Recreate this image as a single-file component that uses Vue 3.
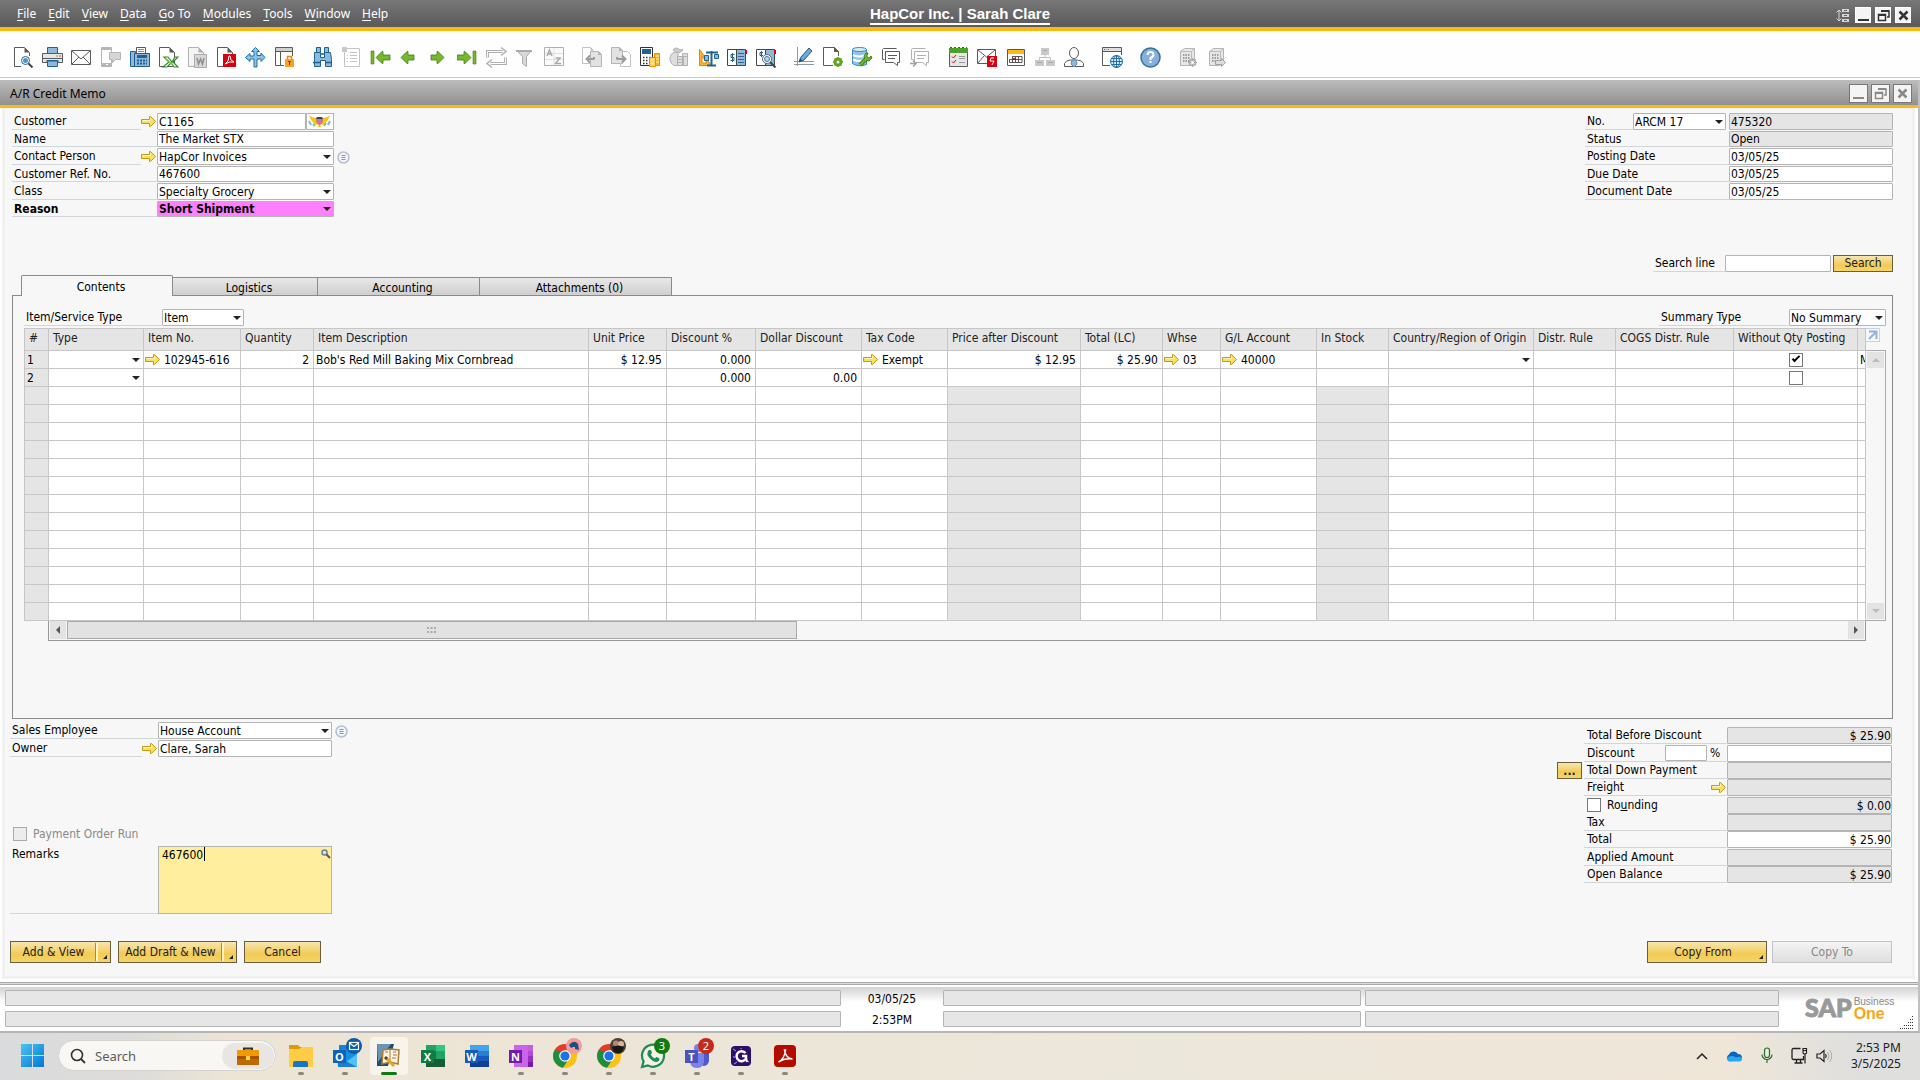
<template>
  <div class="desktop">
    <header class="menubar">
      <nav class="menus">
        <a v-for="m in menus" :key="m" href="#"><u>{{ m.charAt(0) }}</u>{{ m.slice(1) }}</a>
      </nav>
      <a class="company" href="#">HapCor Inc. | Sarah Clare</a>
      <div class="app-controls">
        <svg class="sort-icon" width="13" height="13" viewBox="0 0 13 13">
          <path d="M3 1v11M.5 3.500 3 1l2.500 2.500M.5 9.500 3 12l2.500-2.500" fill="none" stroke="#d8d8d8" />
          <path d="M6 0h7v3H6zM6 5h7v3H6zM6 10h7v3H6z" fill="#d8d8d8" />
          <path d="M8 1.500h3M8 6.500h3M8 11.500h3" stroke="#666" />
        </svg>
        <button v-for="c in controls" :key="c" type="button" class="win-btn" :aria-label="c">
          <svg width="13" height="13" viewBox="0 0 13 13" v-html="controlIcons[c]"></svg>
        </button>
      </div>
    </header>

    <div class="toolbar">
      <div v-for="(group, i) in toolbar" :key="i" class="tool-group">
        <button v-for="name in group" :key="name" type="button" class="tool" :aria-label="name">
          <svg width="21" height="21" viewBox="0 0 21 21" v-html="icons[name]"></svg>
        </button>
      </div>
    </div>

    <main class="window">
      <div class="titlebar">
        <span>A/R Credit Memo</span>
        <div class="doc-controls">
          <button v-for="c in controls" :key="c" type="button" class="win-btn large" :aria-label="c">
            <svg width="13" height="13" viewBox="0 0 13 13" v-html="controlIcons[c]"></svg>
          </button>
        </div>
      </div>

      <div class="body">
        <section class="doc-head">
          <div class="fields">
            <div class="row">
              <label for="customer">Customer</label>
              <svg class="link-arrow" width="15" height="11" viewBox="0 0 15 11" v-html="arrow"></svg>
              <div class="control split">
                <input id="customer" type="text" v-model="doc.customer">
                <button type="button" class="flag" aria-label="Country">
                  <svg width="25" height="15" viewBox="0 0 25 15">
                    <path d="M2 1q3 3 8 3l1 6-2 1Q4 8 2 1zM23 1q-3 3-8 3l-1 6 2 1q5-3 7-10z" fill="#f0c814" />
                    <path d="M10 3h5l1 2H9z" fill="#39405c" />
                    <path d="M9 5h7v3l-3.500 4L9 8z" fill="#d2787e" />
                    <path d="M2 7l2 4M23 7l-2 4" stroke="#86b8d8" stroke-width="2" />
                    <path d="M6 10l2 2M19 9l-2 3" stroke="#8cc07c" stroke-width="2" />
                    <path d="M10 12l2.500 1.500L15 12z" fill="#f0c814" />
                  </svg>
                </button>
              </div>
            </div>
            <div class="row">
              <label for="name">Name</label>
              <input id="name" class="control" type="text" v-model="doc.name">
            </div>
            <div class="row">
              <label for="contact">Contact Person</label>
              <svg class="link-arrow" width="15" height="11" viewBox="0 0 15 11" v-html="arrow"></svg>
              <div class="control select">
                <select id="contact"><option>HapCor Invoices</option></select>
              </div>
              <button type="button" class="list-btn" aria-label="Contact list">
                <svg width="13" height="13" viewBox="0 0 13 13" v-html="listIcon"></svg>
              </button>
            </div>
            <div class="row">
              <label for="ref">Customer Ref. No.</label>
              <input id="ref" class="control" type="text" v-model="doc.ref">
            </div>
            <div class="row">
              <label for="class">Class</label>
              <div class="control select">
                <select id="class"><option>Specialty Grocery</option></select>
              </div>
            </div>
            <div class="row reason">
              <label for="reason">Reason</label>
              <div class="control select">
                <select id="reason"><option>Short Shipment</option></select>
              </div>
            </div>
          </div>

          <div class="fields right">
            <div class="row">
              <label for="series" class="short">No.</label>
              <div class="select series">
                <select id="series"><option>ARCM 17</option></select>
              </div>
              <input class="control locked" type="text" value="475320" readonly aria-label="Document number">
            </div>
            <div v-for="f in docInfo" :key="f.id" class="row">
              <label :for="f.id">{{ f.label }}</label>
              <input :id="f.id" class="control" :class="{ locked: f.locked }" type="text" :value="f.value" :readonly="f.locked">
            </div>
          </div>
        </section>

        <div class="search-row">
          <label for="search-line">Search line</label>
          <input id="search-line" type="text">
          <button type="button" class="gold">Search</button>
        </div>

        <div class="tabs" role="tablist">
          <button
            v-for="(t, i) in tabs"
            :key="t"
            type="button"
            role="tab"
            :aria-selected="i === activeTab"
            :class="['tab', 'tab-' + i, { active: i === activeTab }]"
            @click="activeTab = i"
          >{{ t }}</button>
        </div>

        <section class="panel">
          <div class="panel-top">
            <label for="item-type" class="item-type">Item/Service Type</label>
            <div class="select item-select">
              <select id="item-type"><option>Item</option></select>
            </div>
            <label for="summary" class="summary-label">Summary Type</label>
            <div class="select summary-select">
              <select id="summary"><option>No Summary</option></select>
            </div>
          </div>

          <div class="grid">
            <div class="table-wrap">
              <table>
                <colgroup>
                  <col v-for="c in columns" :key="c.key" :class="'col-' + c.key">
                </colgroup>
                <thead>
                  <tr>
                    <th v-for="c in columns" :key="c.key" scope="col">{{ c.label }}</th>
                  </tr>
                </thead>
                <tbody>
                  <tr v-for="n in 15" :key="n">
                    <td
                      v-for="c in columns"
                      :key="c.key"
                      :class="{ num: c.num, idx: c.key === 'idx', locked: n > 2 && c.locked, center: c.key === 'qtypost' }"
                    >
                      <template v-if="n <= lines.length">
                        <input
                          v-if="c.key === 'qtypost'"
                          type="checkbox"
                          v-model="lines[n - 1].qtypost"
                          :aria-label="'Without Qty Posting ' + n"
                        >
                        <div v-else-if="lines[n - 1].selects.includes(c.key)" class="select cell">
                          <select :aria-label="c.label + ' ' + n"><option></option></select>
                        </div>
                        <div v-else-if="c.link && lines[n - 1][c.key]" class="linked">
                          <svg width="15" height="11" viewBox="0 0 15 11" v-html="arrow"></svg>
                          <span>{{ lines[n - 1][c.key] }}</span>
                        </div>
                        <template v-else>{{ lines[n - 1][c.key] }}</template>
                      </template>
                    </td>
                  </tr>
                </tbody>
              </table>
            </div>
            <div class="side">
              <button type="button" class="expand" aria-label="Expand grid">
                <svg width="14" height="14" viewBox="0 0 14 14">
                  <path d="M0 .5h13.500V14M0 13.500h13" fill="none" stroke="#c3d4e8" />
                  <path d="M3 3.500h7.500V11M10 4l-7 7" fill="none" stroke="#94b3d9" stroke-width="2" />
                </svg>
              </button>
              <div class="vscroll">
                <button type="button" aria-label="Scroll up"><i class="up"></i></button>
                <button type="button" aria-label="Scroll down"><i class="down"></i></button>
              </div>
            </div>
          </div>
          <div class="hscroll">
            <button type="button" aria-label="Scroll left"><i class="left"></i></button>
            <div class="track">
              <div class="thumb">
                <svg width="9" height="6" viewBox="0 0 9 6">
                  <path d="M0 1h9M0 5h9" stroke="#aaa" stroke-width="2" stroke-dasharray="2 1.500" />
                </svg>
              </div>
            </div>
            <button type="button" aria-label="Scroll right"><i class="right"></i></button>
          </div>
        </section>

        <section class="doc-foot">
          <div class="foot-left">
            <div class="row">
              <label for="employee">Sales Employee</label>
              <div class="control select">
                <select id="employee"><option>House Account</option></select>
              </div>
              <button type="button" class="list-btn" aria-label="Employee list">
                <svg width="13" height="13" viewBox="0 0 13 13" v-html="listIcon"></svg>
              </button>
            </div>
            <div class="row">
              <label for="owner">Owner</label>
              <svg class="link-arrow" width="15" height="11" viewBox="0 0 15 11" v-html="arrow"></svg>
              <input id="owner" class="control" type="text" v-model="doc.owner">
            </div>
            <label class="payment">
              <input type="checkbox" disabled>
              <span>Payment Order Run</span>
            </label>
            <div class="remarks">
              <label for="remarks">Remarks</label>
              <div class="remarks-box">
                <textarea id="remarks" v-model="doc.remarks"></textarea>
                <span class="caret"></span>
                <svg class="lens" width="10" height="10" viewBox="0 0 10 10">
                  <circle cx="3.500" cy="3.500" r="2.500" fill="#dce8f4" stroke="#6d7f96" stroke-width="1.500" />
                  <path d="M5.500 5.500 9 9" stroke="#555" stroke-width="2" />
                </svg>
              </div>
            </div>
          </div>

          <div class="totals">
            <div v-for="t in totals" :key="t.label" class="total-row">
              <button v-if="t.more" type="button" class="gold more" aria-label="Down payments">...</button>
              <div class="total-label" :class="{ plain: t.check }">
                <label v-if="t.check" class="rounding">
                  <input type="checkbox" v-model="rounding">
                  <span>Ro<u>u</u>nding</span>
                </label>
                <label v-else :for="t.id">{{ t.label }}</label>
                <template v-if="t.percent">
                  <input class="percent" type="text" aria-label="Discount percent">
                  <span class="pct">%</span>
                </template>
                <svg v-if="t.link" class="link-arrow" width="15" height="11" viewBox="0 0 15 11" v-html="arrow"></svg>
              </div>
              <input
                :id="t.id"
                class="amount"
                :class="{ locked: t.locked }"
                type="text"
                :value="t.value"
                :readonly="t.locked"
                :aria-label="t.label"
              >
            </div>
          </div>
        </section>

        <div class="actions">
          <button type="button" class="gold drop split-btn add-view"><span>Add &amp; View</span></button>
          <button type="button" class="gold drop split-btn add-draft"><span>Add Draft &amp; New</span></button>
          <button type="button" class="gold cancel">Cancel</button>
          <button type="button" class="gold drop copy first"><span>Copy From</span></button>
          <button type="button" class="gold copy" disabled>Copy To</button>
        </div>
      </div>

      <footer class="status">
        <div class="cells wide"><span></span><span></span></div>
        <div class="stamp"><time>03/05/25</time><time>2:53PM</time></div>
        <div class="cells"><span></span><span></span></div>
        <div class="cells last"><span></span><span></span></div>
        <div class="brand">
          <b class="sap">SAP</b>
          <div class="b1"><span>Business</span><b>One</b></div>
          <svg class="grip" width="14" height="14" viewBox="0 0 14 14">
            <path
              d="M12 1.500h2M10 4.500h4M8 7.500h6M4 10.500h10M0 13.500h14"
              stroke="#333"
              stroke-dasharray="1 1"
            />
          </svg>
        </div>
      </footer>
    </main>

    <footer class="taskbar">
      <button type="button" class="start" aria-label="Start">
        <svg width="23" height="23" viewBox="0 0 23 23">
          <defs>
            <linearGradient id="win" x1="0" y1="0" x2="1" y2="1">
              <stop offset="0" stop-color="#4cc2f5" />
              <stop offset="1" stop-color="#0078d4" />
            </linearGradient>
          </defs>
          <path d="M0 0h11v11H0zM12 0h11v11H12zM0 12h11v11H0zM12 12h11v11H12z" fill="url(#win)" />
        </svg>
      </button>
      <div class="task-search">
        <svg width="16" height="16" viewBox="0 0 16 16">
          <circle cx="7" cy="7" r="5.500" fill="none" stroke="#333" stroke-width="1.600" />
          <path d="M11 11l4 4" stroke="#333" stroke-width="1.800" />
        </svg>
        <input type="text" placeholder="Search" aria-label="Search Windows">
        <span class="case">
          <svg width="22" height="18" viewBox="0 0 22 18">
            <path d="M7 3V1.500h8V3" fill="none" stroke="#333" stroke-width="2" />
            <path d="M0 3h22v6H0z" fill="#f09a06" />
            <path d="M0 9h22v4H0z" fill="#a65400" />
            <path d="M0 12h22v6H0z" fill="#bf6a02" />
            <path d="M9 9h4v4H9z" fill="#ffd93b" />
          </svg>
        </span>
      </div>
      <div class="apps">
        <button
          v-for="a in apps"
          :key="a.id"
          type="button"
          class="app"
          :class="{ open: a.open, current: a.current }"
          :aria-label="a.id"
        >
          <svg width="32" height="32" viewBox="0 0 32 32" v-html="appIcons[a.icon]"></svg>
          <span v-if="a.badge" class="badge" :class="a.badge">{{ a.count }}
            <svg v-if="!a.count" width="16" height="16" viewBox="0 0 16 16" v-html="badgeIcons[a.badge]"></svg>
          </span>
        </button>
      </div>
      <div class="tray">
        <svg width="12" height="8" viewBox="0 0 12 8"><path d="M1 7l5-5 5 5" fill="none" stroke="#222" stroke-width="1.500" /></svg>
        <svg width="17" height="12" viewBox="0 0 17 12">
          <path d="M4 11.500a3.800 3.800 0 0 1-1-7A5 5 0 0 1 12 4a4 4 0 0 1 4 4z" fill="#0a64c0" />
          <path d="M1 9c2-4 6-3 8-2s4-1 6 0a2.500 2.500 0 0 1-1 4.500H4A3 3 0 0 1 1 9z" fill="#28a8ea" />
        </svg>
        <svg width="12" height="17" viewBox="0 0 12 17">
          <rect x="3.500" y="1" width="5" height="9.500" rx="2.500" fill="#e4eedf" stroke="#2c6b2c" stroke-width="1.200" />
          <path d="M1 7.500a5 5 0 0 0 10 0M6 12.500V16" fill="none" stroke="#2c6b2c" stroke-width="1.200" />
        </svg>
        <svg width="17" height="17" viewBox="0 0 17 17">
          <path d="M9.500 1.500h-7a1.500 1.500 0 0 0-1.500 1.500v8a1.500 1.500 0 0 0 1.500 1.500h10V9M5.500 12.500V16M9.500 12.500V16M3.500 16h8" fill="none" stroke="#222" stroke-width="1.300" />
          <path d="M12 1.500h3.500V6l-1 1h-1.500l-1-1zM14 7v9.500M12 3.500h3.500" fill="none" stroke="#222" stroke-width="1.200" />
        </svg>
        <svg width="17" height="14" viewBox="0 0 17 14">
          <path d="M1 5h3l4-3.500v11L4 9H1z" fill="none" stroke="#222" stroke-width="1.200" />
          <path d="M9.500 5q1.500 2 0 4" fill="none" stroke="#222" stroke-width="1.200" />
          <path d="M11.500 3q3 4 0 8M13.500 1q4.500 6 0 12" fill="none" stroke="#aaa" />
        </svg>
        <div class="clock"><span>2:53 PM</span><span>3/5/2025</span></div>
      </div>
    </footer>
  </div>
</template>

<script setup>
import { reactive, ref } from 'vue'

const menus = ['File', 'Edit', 'View', 'Data', 'Go To', 'Modules', 'Tools', 'Window', 'Help']
const controls = ['Minimize', 'Restore', 'Close']
const tabs = ['Contents', 'Logistics', 'Accounting', 'Attachments (0)']
const activeTab = ref(0)
const rounding = ref(false)

const doc = reactive({
  customer: 'C1165',
  name: 'The Market STX',
  ref: '467600',
  owner: 'Clare, Sarah',
  remarks: '467600'
})

const docInfo = [
  { id: 'status', label: 'Status', value: 'Open', locked: true },
  { id: 'posting', label: 'Posting Date', value: '03/05/25' },
  { id: 'due', label: 'Due Date', value: '03/05/25' },
  { id: 'docdate', label: 'Document Date', value: '03/05/25' }
]

const columns = [
  { key: 'idx', label: '#' },
  { key: 'type', label: 'Type' },
  { key: 'item', label: 'Item No.', link: true },
  { key: 'qty', label: 'Quantity', num: true },
  { key: 'desc', label: 'Item Description' },
  { key: 'price', label: 'Unit Price', num: true },
  { key: 'disc', label: 'Discount %', num: true },
  { key: 'dollar', label: 'Dollar Discount', num: true },
  { key: 'tax', label: 'Tax Code', link: true },
  { key: 'after', label: 'Price after Discount', num: true, locked: true },
  { key: 'total', label: 'Total (LC)', num: true },
  { key: 'whse', label: 'Whse', link: true },
  { key: 'gl', label: 'G/L Account', link: true },
  { key: 'stock', label: 'In Stock', locked: true },
  { key: 'origin', label: 'Country/Region of Origin' },
  { key: 'distr', label: 'Distr. Rule' },
  { key: 'cogs', label: 'COGS Distr. Rule' },
  { key: 'qtypost', label: 'Without Qty Posting' },
  { key: 'more', label: '' }
]

const lines = reactive([
  {
    idx: '1', item: '102945-616', qty: '2', desc: "Bob's Red Mill Baking Mix Cornbread",
    price: '$ 12.95', disc: '0.000', tax: 'Exempt', after: '$ 12.95', total: '$ 25.90',
    whse: '03', gl: '40000', more: 'M', qtypost: true, selects: ['type', 'origin']
  },
  { idx: '2', disc: '0.000', dollar: '0.00', qtypost: false, selects: ['type'] }
])

const totals = [
  { id: 'before', label: 'Total Before Discount', value: '$ 25.90', locked: true },
  { id: 'discount', label: 'Discount', value: '', percent: true },
  { id: 'down', label: 'Total Down Payment', value: '', locked: true, more: true },
  { id: 'freight', label: 'Freight', value: '', locked: true, link: true },
  { id: 'round', label: 'Rounding', value: '$ 0.00', locked: true, check: true },
  { id: 'taxes', label: 'Tax', value: '', locked: true },
  { id: 'total', label: 'Total', value: '$ 25.90' },
  { id: 'applied', label: 'Applied Amount', value: '', locked: true },
  { id: 'balance', label: 'Open Balance', value: '$ 25.90', locked: true }
]

const toolbar = [
  ['Preview', 'Print', 'Email', 'SMS', 'Fax', 'Excel', 'Word', 'PDF', 'Launch', 'Lock'],
  ['Find', 'Form', 'First', 'Previous', 'Next', 'Last', 'Refresh', 'Filter', 'Sort'],
  ['Base', 'Target', 'Gross Profit', 'Payment Means', 'Volume', 'Journal', 'Transactions'],
  ['Layout', 'Form Settings', 'Query', 'Messages', 'Send Message'],
  ['Tasks', 'Alerts', 'Calendar', 'Hierarchy', 'Partner'],
  ['Browser'],
  ['Help'],
  ['Server Settings', 'Server Export']
]

const arrow =
  '<path d="M.5 3.500h8v-3h1l5 5-5 5h-1v-3h-8z" fill="#fbe05a" stroke="#c09a1c"/><path d="M1.500 4.500h8v-2" fill="none" stroke="#fff6bd"/>'
const listIcon =
  '<circle cx="6.500" cy="6.500" r="5.500" fill="#f1f4fa" stroke="#b4bfd3" stroke-width="1.500"/><path d="M4.500 4.500h4M4.500 6.500h4M4.500 8.500h4" stroke="#8a94aa"/>'

const controlIcons = {
  Minimize: '<path d="M1 11h11" stroke="currentColor" stroke-width="2"/>',
  Restore:
    '<path d="M4 2h8v6h-2M1.500 5.500h7v6h-7z" fill="none" stroke="currentColor" stroke-width="1.500"/><path d="M1 6h8M4 2h8" stroke="currentColor" stroke-width="2"/>',
  Close: '<path d="M2.500 2.500l8 8M10.500 2.500l-8 8" stroke="currentColor" stroke-width="2.500"/>'
}

const page = (c = '#5a5a5a', f = '#fff') =>
  `<path d="M1.500.5h10l5 5v14h-15z" fill="${f}" stroke="${c}"/><path d="M11.500.5v5h5z" fill="${c}"/>`
const bubble = (c) =>
  `<path d="M15.500 1.500H2.500l-1 1v10h2" fill="none" stroke="${c}"/><path d="M4.500 4.500h14v11h-2v3l-4-3h-8z" fill="#fff" stroke="${c}"/><path d="M7 8.500h9M7 11.500h7" stroke="${c}"/>`
const server = (extra) =>
  `<path d="M2.500 4.500l4-3h10v14l-4 3h-10z" fill="#e6e6e6" stroke="#b5b5b5"/><path d="M2.500 4.500h11v14M13.500 4.500l3-3" fill="none" stroke="#bcbcbc"/><path d="M5 8h7M5 11h7M5 14h7" stroke="#9f9f9f" stroke-width="2" stroke-dasharray="1.500 1"/>${extra}`

const icons = {
  Preview: `${page()}<path d="M8 9h10v11H8z" fill="#fff"/><path d="M15 16l4.500 4.500" stroke="#444" stroke-width="2"/><circle cx="12.500" cy="13.500" r="4" fill="#fff" stroke="#24618f"/><circle cx="12.500" cy="13.500" r="2.500" fill="#4f93c7"/>`,
  Print:
    '<path d="M5.500.5h10v7h-10z" fill="#8fb8dc" stroke="#1f6391"/><path d="M.5 6.500h20v9H.500z" fill="#e6e6e6" stroke="#5a5a5a"/><path d="M1 11.500h19" stroke="#5a5a5a"/><path d="M14 9h2" stroke="#7ab800"/><path d="M17 9h2" stroke="#d44"/><path d="M5.500 13.500h10v6h-10z" fill="#8fb8dc" stroke="#1f6391"/><path d="M4 14h13" stroke="#1f6391"/>',
  Email:
    '<path d="M.5 3.500h19v14H.500z" fill="#fff" stroke="#5a5a5a"/><path d="M1 4l9 8 9-8M1 17l7-7M19 17l-7-7" fill="none" stroke="#5a5a5a"/>',
  SMS: '<path d="M1.500.5h10v19h-10z" fill="#fff" stroke="#b5b5b5"/><path d="M2 1h9v2H2zM2 16h9v3H2z" fill="#b5b5b5"/><path d="M6 17h2v1H6z" fill="#fff"/><path d="M9.500 5.500h11v7h-5l-3 3v-3h-3z" fill="#d5d5d5" stroke="#b5b5b5"/>',
  Fax: '<path d="M1.500 4.500h5v15h-5z" fill="#8fb8dc" stroke="#1f5d92"/><path d="M7.500.5h9v6h-9z" fill="#fff" stroke="#5a5a5a"/><path d="M9 2.500h6M9 4.500h6" stroke="#8a8a8a"/><path d="M5.500 6.500h15v13h-15z" fill="#8fb8dc" stroke="#1f5d92"/><path d="M8 8h10v3H8z" fill="#1f6391"/><path d="M8 13.500h10M8 16.500h10" stroke="#1f5d92" stroke-width="2" stroke-dasharray="2 1"/>',
  Excel: `${page()}<path d="M6 10h4l4 5 3-5h3l-5 5 5 5h-4l-3-4-4 4H5l6-5z" fill="#fff" stroke="#2f8a2c" stroke-width="1.200"/><path d="M7 11l9 8" stroke="#7cc24a" stroke-width="1.500"/>`,
  Word: `${page('#b0b0b0', '#f4f4f4')}<path d="M7.500 7.500h12v13h-12z" fill="#d8d8d8" stroke="#aaa"/><path d="M10 11l1.500 6 2-5 2 5L17 11" fill="none" stroke="#8e8e8e" stroke-width="1.500"/>`,
  PDF: `${page()}<path d="M7 7h13v13H7z" fill="#d8000c"/><path d="M9 17q4-2 4-8h1q0 5 4 6-4-1-9 2z" fill="none" stroke="#fff"/>`,
  Launch:
    '<path d="M10.500.5l4 4h-2.500v4h4V6l4 4.500-4 4V12h-4v8h-3v-8H5v2.500L.5 10.500l4.500-4V9h4V4.500H6.500z" fill="#8cc4ea" stroke="#1f6fa5"/>',
  Lock: '<path d="M10 18.500H1.500v-18h17V9" fill="#fff" stroke="#5a5a5a"/><path d="M2 1h16v3H2z" fill="#d0d0d0"/><path d="M2 4.500h16M6.500 5v13" stroke="#5a5a5a"/><path d="M13.500 12V9.500h4V12" fill="none" stroke="#e08a00" stroke-width="1.500"/><path d="M11 12h9v8h-9z" fill="#f9a11b"/><path d="M14 14.500h3M15.500 14v4" stroke="#6b3d00"/>',
  Find: '<path d="M4.500.5h4v5h-4zM12.500.5h4v5h-4z" fill="#8fb8dc" stroke="#1f6391"/><path d="M2.500 5.500h6v5h4v-5h6l1 7v7h-6v-6h-5v6h-6v-7z" fill="#8fb8dc" stroke="#1f6391"/><path d="M1 15.500h7M13 15.500h7M9 7h3" stroke="#1f6391" stroke-width="1.500"/>',
  Form: '<path d="M3.500 1.500h15v18h-15z" fill="#fff" stroke="#c4c4c4"/><path d="M1 0h5v5H1z" fill="#c9c9c9"/><path d="M6 8.500h1M9 8.500h7M6 11.500h1M9 11.500h7M6 14.500h1M9 14.500h7M9 5.500h7" stroke="#c4c4c4"/>',
  First:
    '<path d="M1 4h3v13H1z" fill="#76b82a" stroke="#3f7d1c" stroke-width=".6"/><path d="M6 10.500l6-6h1V8h7v5h-7v3.500h-1z" fill="#76b82a" stroke="#3f7d1c" stroke-width=".8"/>',
  Previous:
    '<path d="M2 10.500l6-6h1V8h6v5H9v3.500H8z" fill="#76b82a" stroke="#3f7d1c" stroke-width=".8"/>',
  Next: '<path d="M16 10.500l-6-6H9V8H3v5h6v3.500h1z" fill="#76b82a" stroke="#3f7d1c" stroke-width=".8"/>',
  Last: '<path d="M16 4h3v13h-3z" fill="#76b82a" stroke="#3f7d1c" stroke-width=".6"/><path d="M14 10.500l-6-6H7V8H0v5h7v3.500h1z" fill="#76b82a" stroke="#3f7d1c" stroke-width=".8"/>',
  Refresh:
    '<path d="M1.500 10.500v-6h15M19.500 10.500v6h-15" fill="none" stroke="#b0b0b0" stroke-width="3"/><path d="M1.500 10V4.500h15M19.500 11v5.500h-15" fill="none" stroke="#fff"/><path d="M15 .5l5 4-5 4M6 12.500l-5 4 5 4" fill="none" stroke="#b0b0b0" stroke-width="1.500"/>',
  Filter:
    '<path d="M1.500 3.500h15l-5 6v10l-4-3v-7z" fill="#d8d8d8" stroke="#ababab"/><path d="M1 4h16" stroke="#ababab" stroke-width="2"/>',
  Sort: '<path d="M.5.5h19v18H.500z" fill="#fafafa" stroke="#b0b0b0"/><path d="M10 1v17M1 6.500h18M1 12.500h18" stroke="#e0e0e0"/><path d="M3 9l2.500-6L8 9M4 7h3" fill="none" stroke="#aaa" stroke-width="1.500"/><path d="M11.500 11H16l-4.500 5.500H17" fill="none" stroke="#aaa" stroke-width="1.500"/>',
  Base: '<path d="M.5.5h8l3 3v13H.500z" fill="#fff" stroke="#c2c2c2"/><path d="M8.500.5v3h3z" fill="#b8b8b8"/><path d="M8.500 4.500h8l3 3v12h-11z" fill="#e2e2e2" stroke="#b5b5b5"/><path d="M16 4v4h4z" fill="#b5b5b5"/><path d="M12 12H5M8 8.500L4.500 12 8 15.500M12 10v2.500" fill="none" stroke="#9c9c9c" stroke-width="2"/>',
  Target:
    '<path d="M9.500 4.500h7l3 3v12h-10z" fill="#fff" stroke="#c2c2c2"/><path d="M.5.5h8l3 3v13H.500z" fill="#e2e2e2" stroke="#b5b5b5"/><path d="M8 0v4h4z" fill="#b5b5b5"/><path d="M6 12h8M11 8.500l3.500 3.500-3.500 3.500M6 10v2.500" fill="none" stroke="#9c9c9c" stroke-width="2"/>',
  'Gross Profit':
    '<path d="M.5.5h12v18H.500z" fill="#fff" stroke="#333"/><path d="M2 2h9v5H2z" fill="#1f6391"/><path d="M3 10.500h8M3 13.500h8M3 16.500h8" stroke="#333" stroke-width="1.500" stroke-dasharray="1.500 1.500"/><path d="M14.500 6.500h5v12h-5z" fill="#f7b52c" stroke="#ee8b00"/><path d="M9.500 10.500h6v9h-6z" fill="#fcd260" stroke="#ee8b00"/><path d="M11 13h3M11 16h3M16 9h3M16 12h3M16 15h3" stroke="#fff0b0"/>',
  'Payment Means':
    '<path d="M9 6C6 4 1 6 1 11.500s4 8 8 7z" fill="#ddd" stroke="#b0b0b0"/><path d="M4 3q3-4 7 0 2-1 3 0-3 4-7 2z" fill="#ccc" stroke="#a9b3a9"/><path d="M13.500 6.500h5v12h-5zM8.500 9.500h6v9h-6z" fill="#ddd" stroke="#b0b0b0"/><path d="M9 12.500h5M9 15.500h5M14 9.500h4" stroke="#b5b5b5"/>',
  Volume:
    '<path d="M1.500 2.500v16h12zM4 9v7h5z" fill="#f9b233" fill-rule="evenodd" stroke="#e58600"/><path d="M8 5.500h12M13.500 4v14M9 18.500h9" stroke="#1f6391" stroke-width="2"/><path d="M6.500 8.500h4v5h-4zM16.500 7.500h4v4h-4z" fill="#8fb8dc" stroke="#1f6391"/>',
  Journal:
    '<path d="M.5 2.500h9v16h-9z" fill="#fff" stroke="#444"/><path d="M9.500 2.500h9v16h-9z" fill="#8fb8dc" stroke="#444"/><path d="M18 3h2v4h-2z" fill="#d8000c"/><path d="M11 6.500h6M11 9.500h6M11 12.500h6M11 15.500h6" stroke="#2d6796"/><path d="M7.500 7.500H4v3h3v3H3.500M5.500 6v9" fill="none" stroke="#1f6391"/>',
  Transactions:
    '<path d="M.5 2.500h9v16h-9z" fill="#fff" stroke="#444"/><path d="M9.500 2.500h9v16h-9z" fill="#8fb8dc" stroke="#444"/><path d="M18 3h2v4h-2z" fill="#d8000c"/><path d="M7 5.500H4v3h3M5.500 4v6" fill="none" stroke="#1f6391"/><path d="M14 15l5.500 5.500" stroke="#444" stroke-width="2"/><circle cx="11" cy="12" r="4.500" fill="#fff" stroke="#666"/><circle cx="11" cy="12" r="2.500" fill="#b8d6ee" stroke="#2f7fb5"/>',
  Layout:
    '<path d="M3.500 0v19M0 17.500h20M0 14.500h20" stroke="#8d9b9f"/><path d="M5 15l2-5 8-9 3 3-8 9z" fill="#6fa8d6" stroke="#1f5d88"/><path d="M5 15l1-4 3 3z" fill="#1f5d88"/>',
  'Form Settings':
    '<path d="M10 18.500H.500v-18h11l4 4V9" fill="#fff" stroke="#5a5a5a"/><path d="M11 0v5h5z" fill="#5a5a5a"/><circle cx="15" cy="15" r="3" fill="#fff" stroke="#5ba51b" stroke-width="3"/><path d="M15 10v10M10 15h10M11.500 11.500l7 7M18.500 11.500l-7 7" stroke="#5ba51b" stroke-width="1.500"/><circle cx="15" cy="15" r="1.500" fill="#fff"/>',
  Query:
    '<path d="M.5 2.500v14q6 4 14 1V2.500z" fill="#8fc4ea" stroke="#3a87bd"/><ellipse cx="7.500" cy="2.500" rx="7" ry="2" fill="#d8ecf8" stroke="#3a87bd"/><path d="M1 8q6 3 13 0M1 12.500q6 3 13 0" fill="none" stroke="#fff" stroke-width="2"/><path d="M8 18l7-7" stroke="#3f7d1c" stroke-width="4"/><path d="M14 6l-2 3 1 4 4 1 3-3-1-2-2 2-2-1v-2l1-2z" fill="#76b82a" stroke="#3f7d1c"/><path d="M8 18l6-6" stroke="#76b82a" stroke-width="2"/>',
  Messages: bubble('#5a5a5a'),
  'Send Message': `${bubble('#b0b0b0')}<path d="M0 16.500h5M3 13.500l3 3-3 3" fill="none" stroke="#a0a0a0" stroke-width="1.500"/>`,
  Tasks:
    '<path d="M1.500 1.500h18v18h-18z" fill="#e6e6e6" stroke="#5a5a5a"/><path d="M1 1h19v5H1z" fill="#4ea02a"/><path d="M2 .5h17" stroke="#2f6f16" stroke-dasharray="2 2"/><path d="M4 9.500l1.500 1.500L8 8M4 14.500l1.500 1.500L8 13" fill="none" stroke="#d8000c"/><path d="M11 9.500h6M11 11.500h6M11 15.500h6" stroke="#999"/>',
  Alerts:
    '<path d="M.5 2.500h18v14H.500z" fill="#fff" stroke="#5a5a5a"/><path d="M1 3l8.500 7L18 3M1 16l6-7" fill="none" stroke="#5a5a5a"/><path d="M10 9h10v11H10z" fill="#d8000c"/><path d="M17 11h-3l-1 3h4l-2 4" fill="none" stroke="#fff"/>',
  Calendar:
    '<path d="M1.500 2.500h17v16h-17z" fill="#fff" stroke="#5a5a5a"/><path d="M2 3h16v4H2z" fill="#fdb913"/><path d="M6 9.500h10v6H3.500v-3H16M6.500 9v7M9.500 9v7M12.500 9v7" fill="none" stroke="#555"/><path d="M7 11h3v2H7z" fill="#d8000c"/>',
  Hierarchy:
    '<path d="M6 1h8v7H6zM0 13h9v6H0zM11 13h9v6h-9z" fill="#c9c9c9"/><path d="M10 8v3M4.500 13v-2.500h11V13" fill="none" stroke="#c0c0c0"/><path d="M8 3.500h4M2 15.500h5M13 15.500h5" stroke="#a9a9a9"/>',
  Partner:
    '<path d="M.5 19.500v-3q1-3 6-3.500h7q5 .5 6 3.500v3z" fill="#fff" stroke="#5a5a5a"/><ellipse cx="10" cy="6" rx="4.500" ry="5.500" fill="#fff" stroke="#5a5a5a"/><path d="M8 13h4l1 4-3 3-3-3z" fill="#8fb8dc" stroke="#5a8ab5"/>',
  Browser:
    '<path d="M8 18.500H.500V.5h19V8" fill="#fff" stroke="#5a5a5a"/><path d="M1 1h18v3H1z" fill="#e0e0e0"/><path d="M1 4.500h18" stroke="#5a5a5a"/><path d="M2 2.500h1" stroke="#d33"/><path d="M4 2.500h1" stroke="#e7a400"/><path d="M6 2.500h1" stroke="#4a4"/><circle cx="14.500" cy="14.500" r="6" fill="#d9ecf9" stroke="#1f6fa5"/><path d="M8.500 14.500h12M14.500 8.500v12M9.500 11.500h10M9.500 17.500h10" stroke="#1f6fa5"/><ellipse cx="14.500" cy="14.500" rx="3" ry="6" fill="none" stroke="#1f6fa5"/>',
  Help: '<circle cx="10.500" cy="10.500" r="9.500" fill="#86b0da" stroke="#336f9f" stroke-width="1.500"/><path d="M7.500 8q0-3 3-3t3 2.500-3 3.500v2" fill="none" stroke="#fff" stroke-width="2"/><path d="M9.500 14h2v2h-2z" fill="#fff"/>',
  'Server Settings': server(
    '<circle cx="14.500" cy="15.500" r="3" fill="#fff" stroke="#a9a9a9" stroke-width="1.500"/><path d="M14.500 11v9M10 15.500h9M11.500 12.500l6 6M17.500 12.500l-6 6" stroke="#a9a9a9"/><circle cx="14.500" cy="15.500" r="1.500" fill="#fff"/>'
  ),
  'Server Export': server(
    '<path d="M8.500 13.500h6v-2l4 4-4 4v-2h-6z" fill="#ddd" stroke="#a0a0a0"/>'
  )
}

const apps = [
  { id: 'Explorer', icon: 'explorer', open: true },
  { id: 'Outlook', icon: 'outlook', open: true, badge: 'mail' },
  { id: 'SAP Business One', icon: 'sap', current: true },
  { id: 'Excel', icon: 'excel' },
  { id: 'Word', icon: 'word' },
  { id: 'OneNote', icon: 'onenote', open: true },
  { id: 'Chrome Work', icon: 'chrome', open: true, badge: 'pink' },
  { id: 'Chrome Home', icon: 'chrome', open: true, badge: 'photo' },
  { id: 'WhatsApp', icon: 'whatsapp', open: true, badge: 'green', count: '3' },
  { id: 'Teams', icon: 'teams', open: true, badge: 'red', count: '2' },
  { id: 'G', icon: 'g', open: true },
  { id: 'Acrobat', icon: 'acrobat', open: true }
]

const letter = (c, ch) =>
  `<path d="M4 10h13v13H4z" fill="${c}"/><text x="10.500" y="20.500" text-anchor="middle" fill="#fff" font-family="Open Sans, sans-serif" font-weight="700" font-size="11">${ch}</text>`

const appIcons = {
  explorer:
    '<path d="M4 5h9l2 2h13v20H4z" fill="#dd9a0c"/><path d="M4 9h10l3-2h11v20H4z" fill="#ffcd45"/><path d="M8 27v-4q0-2 2-2h11q2 0 2 2v4z" fill="#1277c9"/>',
  outlook: `<path d="M10 5h13v10H10z" fill="#1a82d8"/><path d="M8 13l20-4v18H9z" fill="#1490df"/><path d="M10 27l18-13v13z" fill="#50c0f5"/><path d="M9 17l19 10H9z" fill="#1b7fd1"/>${letter('#0a63bd', 'O')}`,
  sap: '<path d="M4 4h17L15 26H4z" fill="#1f4d78"/><path d="M4 4h14L5 22z" fill="#6c93b5"/><path d="M10 10l7-1 9 1-1 14-8-2-8 2z" fill="#fbf4e0" stroke="#a77f2e" stroke-width="1.500"/><path d="M17 9v13" stroke="#a77f2e"/><path d="M20 12h3M20 15h4M19 18h4M12 12h3" stroke="#b56b5c"/><path d="M13 18l8 8" stroke="#e0a52e" stroke-width="3"/><path d="M12 17l2 2" stroke="#5a4a20" stroke-width="3"/>',
  excel: `<path d="M9 5h10v6H9z" fill="#21a366"/><path d="M19 5h9v6h-9z" fill="#33c481"/><path d="M9 11h10v8H9z" fill="#107c41"/><path d="M19 11h9v8h-9z" fill="#21a366"/><path d="M9 19h19v8H9z" fill="#185c37"/>${letter('#107c41', 'X')}`,
  word: `<path d="M9 5h19v6H9z" fill="#41a5ee"/><path d="M9 11h19v5H9z" fill="#2b7cd3"/><path d="M9 16h19v5H9z" fill="#185abd"/><path d="M9 21h19v6H9z" fill="#103f91"/>${letter('#185abd', 'W')}`,
  onenote: `<path d="M9 5h19v22H9z" fill="#ca64ea"/><path d="M23 5h5v6h-5z" fill="#c05fe0"/><path d="M23 11h5v5h-5z" fill="#ae4bd5"/><path d="M23 16h5v6h-5z" fill="#9332bf"/><path d="M23 22h5v5h-5z" fill="#7719aa"/>${letter('#7719aa', 'N')}`,
  chrome:
    '<circle cx="16" cy="16" r="12" fill="#fbc116"/><path d="M16 16L5.600 10A12 12 0 0 0 14 27.800l4-6z" fill="#1e8e3e"/><path d="M5.600 10a12 12 0 0 1 20.800 0H16l-3 6z" fill="#e33b2e"/><path d="M5.600 10l5.400 9 3-7z" fill="#1e8e3e"/><circle cx="16" cy="16" r="5.800" fill="#fff"/><circle cx="16" cy="16" r="4.600" fill="#1a73e8"/>',
  whatsapp:
    '<path d="M5 27l1.600-5.600a11 11 0 1 1 4.200 4z" fill="#f4f0e4" stroke="#1c8b55" stroke-width="2.200"/><path d="M12 10l2 0 1 3-1.300 1.500q1.300 2.500 4 4L19.500 17l3 1.500q0 3-3 3.500-3 0-6.500-3.500T10.500 13q.2-2 1.500-3z" fill="#1c8b55"/>',
  teams: `<circle cx="17" cy="8" r="4" fill="#7b83eb"/><circle cx="25" cy="10" r="3" fill="#5059c9"/><path d="M20 13h8v8q-1 5-6 5z" fill="#5059c9"/><path d="M10 13h13v9q-1 6-7 6t-7-6z" fill="#7b83eb"/>${letter('#4b53bc', 'T')}`,
  g: '<rect x="6" y="6" width="20" height="20" rx="4" fill="#2b0f6b"/><path d="M8 9l3 2M9 24l3-2M24 22l-2-1M10 17H8M16 8v1" stroke="#b9a4f0"/><path d="M20.500 13a5 5 0 1 0 .5 5.500V16h-4" fill="none" stroke="#fff" stroke-width="2.500"/><path d="M21 18l1 4" stroke="#fff" stroke-width="2"/>',
  acrobat:
    '<rect x="5" y="5" width="22" height="22" rx="4" fill="#b30b00"/><path d="M9.500 22q6-3 7-12h-1q1 8 8 9-8-1-14 3z" fill="none" stroke="#fff" stroke-width="1.500"/>'
}

const badgeIcons = {
  mail: '<rect x="3.500" y="4.500" width="9" height="7" fill="none" stroke="#fff" stroke-width="1.200"/><path d="M3.500 5l4.500 3.500L12.500 5" fill="none" stroke="#fff" stroke-width="1.200"/>',
  pink: '<path d="M3 7q5-6 9-1l1 6-4-1V9H7l-2 1z" fill="#1d4f80"/>',
  photo:
    '<circle cx="8" cy="8" r="8" fill="#4d4038"/><circle cx="6" cy="5.500" r="3" fill="#b88770"/><circle cx="11" cy="6" r="3" fill="#d9b49a"/><path d="M2 9q6-3 12 0-1 6-6 6T2 9z" fill="#191615"/>'
}
</script>

<style>
body {
  background: #fff;
}
</style>

<style scoped>
.desktop,
.desktop * {
  box-sizing: border-box;
}
.desktop {
  min-height: 100vh;
  display: flex;
  flex-direction: column;
  overflow: hidden;
  font-family: "DejaVu Sans Condensed", "DejaVu Sans", sans-serif;
  font-size: 12px;
  line-height: 14px;
  color: #000;
}
button,
input,
select,
textarea {
  font: inherit;
  color: inherit;
  margin: 0;
  padding: 0;
  border: 0;
  border-radius: 0;
  background: none;
}
svg {
  display: block;
  flex-shrink: 0;
}

/* menu bar */
.menubar {
  height: 31px;
  display: grid;
  grid-template-columns: 1fr auto 1fr;
  align-items: center;
  padding: 0 9px;
  background: linear-gradient(#777, #5b595b);
  border-bottom: 4px solid #fdb913;
  color: #fff;
}
.menus {
  display: flex;
  gap: 12px;
  padding-left: 8px;
  font-family: "Noto Sans", sans-serif;
}
.menus a {
  color: #fff;
  text-decoration: none;
}
.menus u {
  text-underline-offset: 2px;
}
.company {
  color: #fff;
  font: bold 15px/18px "Liberation Sans", sans-serif;
  text-decoration: none;
  border-bottom: 2px solid #fff;
  margin-top: 2px;
}
.app-controls {
  display: flex;
  justify-content: flex-end;
  align-items: center;
  gap: 4px;
  margin-top: 3px;
}
.sort-icon {
  margin-right: 2px;
}
.win-btn {
  width: 16px;
  height: 16px;
  display: flex;
  align-items: center;
  justify-content: center;
  background: #f4f4f4;
  border: 1px solid #fff;
  color: #333;
}
.win-btn.large {
  width: 19px;
  height: 19px;
  border-color: #777;
  color: #888;
}

/* toolbar */
.toolbar {
  height: 49px;
  display: flex;
  gap: 9px;
  padding: 16px 12px 0;
  background: linear-gradient(#fefefe 46px, #ccc 46px, #ccc 47px, #fff 47px);
}
.tool-group {
  display: flex;
}
.tool {
  width: 29px;
  height: 21px;
}
.tool svg {
  margin-left: 1px;
}

/* document window */
.window {
  flex: 1;
  display: flex;
  flex-direction: column;
  border-right: 2px solid #c0c0c0;
  border-bottom: 2px solid #b5b5b5;
}
.titlebar {
  height: 28px;
  display: flex;
  align-items: center;
  justify-content: space-between;
  padding: 2px 6px 0 10px;
  background: linear-gradient(#bcbcbc, #909090);
  border-bottom: 3px solid #fdb913;
  font-family: "Noto Sans", sans-serif;
}
.doc-controls {
  display: flex;
  gap: 3px;
}
.body {
  flex: 1;
  margin: 0 3px 0 2px;
  padding: 5px 19px 0 5px;
  background: #f7f7f7;
  border: 3px solid #f1f1f1;
  border-top: 0;
}
.doc-head {
  display: flex;
  justify-content: space-between;
  padding-left: 2px;
}
.row {
  display: flex;
  height: 17px;
  padding-bottom: 1px;
}
.row:nth-child(odd) {
  height: 18px;
}
.row label {
  flex: 1;
  padding: 1px 2px 0;
  border-bottom: 1px solid #d0d6da;
  white-space: nowrap;
}
.fields {
  width: 344px;
}
.fields .row {
  padding-right: 22px;
}
.fields.right {
  width: 308px;
}
.fields.right .row {
  padding-right: 0;
}
.control {
  width: 177px;
  flex-shrink: 0;
}
.right .control {
  width: 164px;
}
.series {
  width: 93px;
  margin-right: 3px;
}
input[type="text"] {
  border: 1px solid #b4b4b4;
  border-radius: 1px;
  background: #fff;
  padding-left: 1px;
  min-width: 0;
  outline: 0;
}
input[type="text"].locked {
  background: #e5e5e5;
}
.split {
  display: flex;
}
.split input {
  flex: 1;
}
.flag {
  width: 28px;
  background: #fff;
  border: 1px solid #b4b4b4;
}
.link-arrow {
  align-self: center;
  margin-right: 1px;
}
.select {
  position: relative;
  background: #fff;
  border: 1px solid #b4b4b4;
  border-radius: 1px;
}
.select select {
  display: block;
  width: 100%;
  height: 100%;
  appearance: none;
  padding-left: 1px;
}
.select::after {
  content: "";
  position: absolute;
  right: 2px;
  top: calc(50% - 2px);
  border: 4px solid transparent;
  border-top-color: #222;
  border-bottom: 0;
  pointer-events: none;
}
.list-btn {
  width: 13px;
  margin: 2px -16px 0 3px;
}
.reason {
  font-weight: bold;
}
.reason .select {
  background: #ff80ff;
}

/* search */
.search-row {
  display: flex;
  justify-content: flex-end;
  height: 17px;
  margin: 37px 0 3px;
}
.search-row label {
  width: 72px;
  padding: 1px 2px;
  border-bottom: 1px solid #d0d6da;
}
.search-row input {
  width: 106px;
  margin-right: 2px;
}
.gold {
  border: 1px solid #66603f;
  background: linear-gradient(#f7e6b0, #f2cb55 60%, #f7d468);
  color: #222;
}
.gold:disabled {
  border-color: #c4c4c4;
  background: linear-gradient(#f4f4f4, #dedede);
  color: #888;
}
.search-row .gold {
  width: 60px;
  line-height: 13px;
}

/* tabs and panel */
.tabs {
  display: flex;
  align-items: flex-end;
  height: 21px;
  margin: 0 0 -1px 11px;
  position: relative;
}
.tab {
  height: 19px;
  padding: 2px 0 0 8px;
  border: 1px solid #8a8a8a;
  border-left: 0;
  background: linear-gradient(#e8e8e8, #cfcfcf);
}
.tab.active {
  height: 21px;
  border-left: 1px solid #8a8a8a;
  border-bottom: 0;
  border-radius: 2px 2px 0 0;
  background: #f7f7f7;
}
.tab-0 { width: 152px; }
.tab-1 { width: 145px; }
.tab-2 { width: 162px; }
.tab-3 { width: 192px; }
.panel {
  margin-left: 2px;
  padding: 13px 6px 77px 11px;
  border: 1px solid #8a8a8a;
}
.panel-top {
  display: flex;
  height: 19px;
  padding-bottom: 2px;
}
.panel-top label {
  padding: 1px 2px;
  border-bottom: 1px solid #d0d6da;
}
.item-type {
  width: 138px;
}
.item-select {
  width: 82px;
}
.summary-label {
  width: 130px;
  margin-left: auto;
}
.summary-select {
  width: 97px;
}
.grid {
  display: flex;
}
.table-wrap {
  flex: 1;
  min-width: 0;
  overflow: hidden;
}
table {
  width: 100%;
  table-layout: fixed;
  border-collapse: separate;
  border-spacing: 0;
  border: 1px solid #c6c6c6;
  border-width: 1px 0 0 1px;
}
.col-idx { width: 24px; }
.col-type { width: 95px; }
.col-item { width: 97px; }
.col-qty { width: 73px; }
.col-price { width: 78px; }
.col-disc { width: 89px; }
.col-dollar { width: 106px; }
.col-tax { width: 86px; }
.col-after { width: 133px; }
.col-total { width: 82px; }
.col-whse { width: 58px; }
.col-gl { width: 96px; }
.col-stock { width: 72px; }
.col-origin { width: 145px; }
.col-distr { width: 82px; }
.col-cogs { width: 118px; }
.col-qtypost { width: 124px; }
.col-more { width: 8px; }
th,
td {
  border: 1px solid #c6c6c6;
  border-width: 0 1px 1px 0;
  white-space: nowrap;
  overflow: hidden;
}
th {
  height: 22px;
  padding: 0 0 4px 4px;
  background: #e5e5e5;
  color: #222;
  font-weight: normal;
  text-align: left;
}
td {
  height: 18px;
  padding: 0 2px;
  background: #fff;
}
td.num {
  text-align: right;
  padding-right: 4px;
}
td.idx,
td.locked {
  background: #e5e5e5;
}
td.center {
  padding: 0;
}
td.center input {
  margin: 0 auto;
}
.linked {
  display: flex;
  align-items: center;
  gap: 4px;
  margin-left: -1px;
}
.select.cell {
  height: 14px;
  border: 0;
  background: none;
}
.select.cell::after {
  right: 1px;
}
input[type="checkbox"] {
  appearance: none;
  width: 14px;
  height: 14px;
  background: #fff;
  border: 1px solid #777;
  display: grid;
  place-items: center;
  flex-shrink: 0;
}
input[type="checkbox"]:checked::after {
  content: "";
  width: 6px;
  height: 2px;
  margin-bottom: 3px;
  border: 2px solid #000;
  border-width: 0 0 2px 2px;
  transform: rotate(-45deg);
}
input[type="checkbox"]:disabled {
  background: #ececec;
  border-color: #aaa;
}
.side {
  width: 20px;
  display: flex;
  flex-direction: column;
}
.expand {
  height: 22px;
  display: flex;
}
.vscroll {
  flex: 1;
  display: flex;
  flex-direction: column;
  justify-content: space-between;
  padding: 1px;
  border: 1px solid #aaa;
  border-left: 0;
}
.vscroll button {
  height: 16px;
  background: #e3e3e3;
}
.vscroll i,
.hscroll i {
  display: block;
  width: 0;
  margin: 0 auto;
  border: 4px solid transparent;
}
.vscroll i.up {
  border-bottom-color: #bbb;
  border-top: 0;
}
.vscroll i.down {
  border-top-color: #bbb;
  border-bottom: 0;
}
.hscroll i.left {
  border-right-color: #555;
  border-left: 0;
}
.hscroll i.right {
  border-left-color: #555;
  border-right: 0;
}
.hscroll {
  display: flex;
  height: 20px;
  margin: 0 20px 0 24px;
  padding: 0 1px 1px;
  border: 1px solid #999;
  border-top: 0;
}
.hscroll button {
  width: 16px;
  background: #e3e3e3;
}
.track {
  flex: 1;
  padding: 0 1px;
}
.thumb {
  width: 41%;
  height: 100%;
  display: flex;
  align-items: center;
  justify-content: center;
  background: #e2e2e2;
  border: 1px solid #aaa;
}

/* footer of the document */
.doc-foot {
  display: flex;
  justify-content: space-between;
  padding: 3px 1px 0 0;
}
.foot-left {
  width: 344px;
}
.foot-left .row {
  height: 18px;
  padding-right: 22px;
}
.foot-left .control {
  width: 174px;
}
.payment {
  display: flex;
  align-items: center;
  gap: 6px;
  margin: 69px 0 5px 3px;
  color: #888;
}
.remarks {
  display: flex;
  height: 68px;
  padding-right: 22px;
}
.remarks > label {
  flex: 1;
  padding: 1px 2px;
  border-bottom: 1px solid #d0d6da;
}
.remarks-box {
  position: relative;
  width: 174px;
}
.remarks textarea {
  display: block;
  width: 100%;
  height: 100%;
  padding: 1px 3px;
  border: 1px solid #b4b4b4;
  background: #ffee9e;
  resize: none;
  outline: 0;
}
.caret {
  position: absolute;
  left: 46px;
  top: 1px;
  width: 1px;
  height: 14px;
  background: #000;
}
.lens {
  position: absolute;
  right: 1px;
  top: 3px;
}
.totals {
  width: 335px;
  padding-top: 5px;
}
.total-row {
  display: flex;
  justify-content: flex-end;
  height: 17px;
}
.total-row:nth-child(3n + 1) {
  height: 18px;
  padding-bottom: 1px;
}
.more {
  width: 25px;
  margin-right: 2px;
  line-height: 10px;
  font-weight: bold;
}
.total-label {
  width: 143px;
  display: flex;
  padding-left: 3px;
  border-bottom: 1px solid #d0d6da;
}
.total-label.plain {
  border-bottom: 0;
}
.total-label > label:first-child {
  flex: 1;
  padding-top: 1px;
  white-space: nowrap;
}
.percent {
  width: 42px;
}
.pct {
  width: 20px;
  padding: 1px 3px;
}
.rounding {
  display: flex;
  gap: 6px;
}
input.amount {
  width: 165px;
  text-align: right;
  padding-right: 0;
}
.actions {
  display: flex;
  gap: 7px;
  height: 22px;
  margin: 27px 1px 13px 0;
}
.drop {
  position: relative;
}
.drop::after {
  content: "";
  position: absolute;
  right: 3px;
  bottom: 3px;
  border: 2px solid #222;
  border-top-color: transparent;
  border-left-color: transparent;
}
.split-btn {
  padding-right: 14px;
}
.split-btn::before {
  content: "";
  position: absolute;
  top: 1px;
  bottom: 1px;
  right: 12px;
  width: 2px;
  border-left: 1px solid #a58d3e;
  background: #fff2c4;
}
.add-view { width: 101px; }
.add-draft { width: 119px; }
.cancel { width: 77px; }
.copy { width: 120px; }
.copy.first {
  margin: 0 -2px 0 auto;
  padding-right: 8px;
}

/* status bar */
.status {
  display: flex;
  height: 49px;
  margin-top: 3px;
  padding: 8px 4px 0 5px;
  background: linear-gradient(#aaa 1px, #ddd 1px, #ddd 2px, #aaa 2px, #aaa 3px, #fff 3px, #fff 5px, #d2d2d2 5px, #fff 20px);
}
.cells {
  flex: 418;
  display: flex;
  flex-direction: column;
  gap: 5px;
  margin-right: 4px;
}
.cells.wide {
  flex: 836;
  margin-right: 0;
}
.cells.last {
  flex: 414;
}
.cells span {
  height: 16px;
  background: #e6e6e6;
  border: 1px solid #b4b4b4;
  border-radius: 1px;
}
.stamp {
  width: 102px;
  display: flex;
  flex-direction: column;
  gap: 7px;
  padding-top: 2px;
  text-align: center;
}
.brand {
  width: 131px;
  display: flex;
  padding-left: 22px;
}
.sap {
  font: 900 25px/34px Lato, sans-serif;
  color: #999;
  -webkit-text-stroke: 1px #999;
}
.b1 {
  display: flex;
  flex-direction: column;
  padding: 7px 0 0 2px;
  font-family: "Liberation Sans", sans-serif;
  font-size: 10px;
  line-height: 10px;
  color: #888;
}
.b1 b {
  font-size: 16px;
  line-height: 14px;
  color: #f5a81c;
}
.grip {
  margin: auto 0 2px auto;
}

/* taskbar */
.taskbar {
  height: 47px;
  display: flex;
  align-items: center;
  padding: 0 19px 2px 21px;
  background: linear-gradient(90deg, #dadbdc, #dddcda 7%, #ece5d5 12%, #ece7db 60%, #efe6d8 90%, #dfdfde 97%);
  font-family: "Noto Sans", sans-serif;
}
.start {
  width: 23px;
  height: 23px;
}
.task-search {
  display: flex;
  align-items: center;
  width: 218px;
  height: 31px;
  margin: 0 6px 0 14px;
  padding: 0 1px 0 11px;
  border: 1px solid #d6d3cc;
  border-radius: 16px;
  background: #f8f7f3;
}
.task-search input[type="text"] {
  flex: 1;
  margin-left: 8px;
  border: 0;
  background: none;
  font-size: 13px;
  line-height: 18px;
}
.task-search input::placeholder {
  color: #5c5c5c;
}
.case {
  width: 52px;
  height: 26px;
  display: flex;
  align-items: center;
  justify-content: center;
  border-radius: 13px;
  background: #e8e6e2;
}
.apps {
  display: flex;
  gap: 6px;
}
.app {
  position: relative;
  width: 38px;
  height: 38px;
  display: flex;
  justify-content: center;
  padding-top: 3px;
  border-radius: 4px;
}
.app.current {
  background: #f7f4ed;
}
.app.open::after,
.app.current::after {
  content: "";
  position: absolute;
  bottom: 0;
  left: 16px;
  width: 6px;
  height: 3px;
  border-radius: 2px;
  background: #8a8781;
}
.app.current::after {
  left: 11px;
  width: 16px;
  background: #107c10;
}
.badge {
  position: absolute;
  top: 1px;
  right: 2px;
  width: 16px;
  height: 16px;
  border-radius: 50%;
  font-size: 11px;
  line-height: 16px;
  color: #fff;
}
.badge.mail { background: #0a5cad; }
.badge.pink { background: #f49a9f; }
.badge.green { background: #107c10; }
.badge.red { background: #c42b1c; }
.tray {
  display: flex;
  align-items: center;
  gap: 18px;
  margin-left: auto;
}
.tray svg:nth-of-type(5) {
  margin-left: -10px;
}
.clock {
  display: flex;
  flex-direction: column;
  text-align: right;
  line-height: 16px;
  color: #222;
}
</style>
